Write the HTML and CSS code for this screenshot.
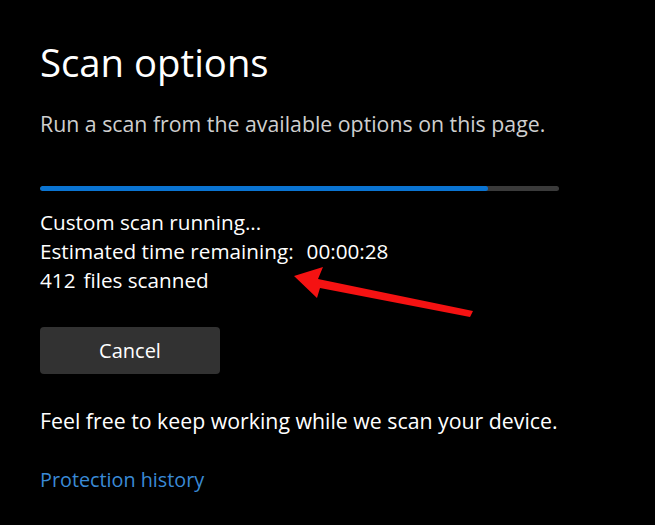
FILE: index.html
```html
<!DOCTYPE html>
<html lang="en">
<head>
<meta charset="utf-8">
<title>Scan options</title>
<link rel="stylesheet" href="styles.css">
</head>
<body>
<main class="page">
  <h1 class="title">Scan options</h1>
  <p class="subtitle">Run a scan from the available options on this page.</p>
  <div class="progress"><div class="progress-fill" style="width: 86.3%"></div></div>
  <div class="status">
    <p class="line">Custom scan running...</p>
    <p class="line">Estimated time remaining:<span class="gap-time">00:00:28</span></p>
    <p class="line">412<span class="gap">files scanned</span></p>
  </div>
  <button class="btn" type="button">Cancel</button>
  <p class="note">Feel free to keep working while we scan your device.</p>
  <a class="link" href="#">Protection history</a>
  <svg class="arrow" width="655" height="525" viewBox="0 0 655 525" aria-hidden="true">
    <polygon points="294,276 323,267 318,279 473,311 470,317 320,288 317,298" fill="#f51212"/>
  </svg>
</main>
</body>
</html>
```

FILE: styles.css
```css
html, body {
  margin: 0;
  padding: 0;
  background: #000;
}
.page {
  position: relative;
  width: 655px;
  height: 525px;
  box-sizing: border-box;
  padding: 37px 0 0 40px;
  font-family: "Open Sans", "Noto Sans", sans-serif;
  color: #fff;
  overflow: hidden;
}
.title {
  margin: 0;
  font-size: 38.3px;
  line-height: 50px;
  font-weight: 400;
}
.subtitle {
  margin: 23px 0 0;
  font-size: 21.3px;
  line-height: 28px;
  color: #cfcfcf;
}
.progress {
  margin-top: 48px;
  width: 519px;
  height: 5px;
  border-radius: 3px;
  background: #3a3a3a;
  overflow: hidden;
}
.progress-fill {
  height: 100%;
  border-radius: 3px;
  background: #0a74d2;
}
.status {
  margin-top: 17px;
}
.line {
  margin: 0;
  font-size: 20.7px;
  line-height: 29px;
}
.gap { margin-left: 8px; }
.gap-time { margin-left: 13px; }
.btn {
  display: block;
  margin-top: 32px;
  width: 180px;
  height: 47px;
  border: none;
  border-radius: 4px;
  background: #323232;
  color: #fff;
  font-family: inherit;
  font-size: 20px;
  padding: 0;
}
.note {
  margin: 32px 0 0;
  font-size: 21.3px;
  line-height: 29px;
}
.link {
  display: block;
  margin-top: 30px;
  font-size: 19.8px;
  line-height: 29px;
  color: #3a8ad6;
  text-decoration: none;
}
.arrow {
  position: absolute;
  left: 0;
  top: 0;
  pointer-events: none;
}
```
